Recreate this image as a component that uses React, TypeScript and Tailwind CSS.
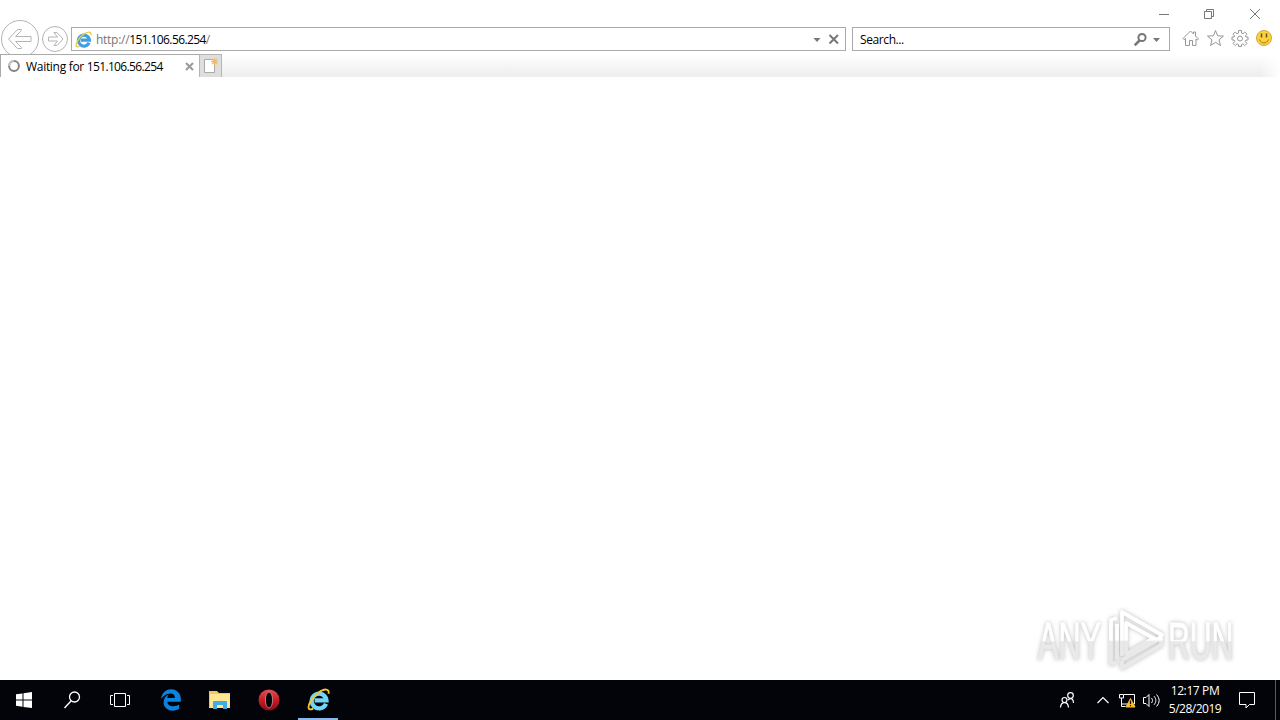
import { FaEdgeLegacy } from 'react-icons/fa6'

const IeLogo = ({ size, light = false }: { size: number; light?: boolean }) => (
  <svg width={size} height={size} viewBox="0 0 24 24" fill="none">
    <path
      d="M19.800 16.400A7.700 7.700 0 1 1 20.300 13H8"
      stroke={light ? '#72d5f6' : '#409fe0'}
      strokeWidth="4.500"
    />
    <path
      d="M6.500 21.500C1.500 24 0 20.500 3.500 14.300 7.500 7.200 15.500 1.200 20 1.600c2.400.3 3 2 2.400 4.400"
      stroke={light ? '#f9c52c' : '#e5cb42'}
      strokeWidth="1.900"
    />
  </svg>
)

const WindowButtons = () => (
  <div className="flex h-[27px] justify-end pr-[18px] text-[#777]">
    <svg width="104" height="27" viewBox="1158 0 104 27" fill="none" stroke="currentColor">
      <path d="M1159 14.5h10M1204.500 11.500h7v7h-7zM1206.500 11v-1.500h7v7h-2M1250 9l10 10M1260 9l-10 10" />
    </svg>
  </div>
)

const NavButtons = () => (
  <svg width="71" height="38" viewBox="0 19 71 38" fill="none" stroke="#b4b4b4" className="-mt-2 shrink-0">
    <circle cx="20" cy="39" r="18.500" fill="#fff" />
    <circle cx="55" cy="39" r="12.500" fill="#fff" />
    <path d="M8.500 39l9-9.500h4v1l-6 6h15.500v5H15.500l6 6v1h-4z" />
    <path d="M63 39l-6-6.500h-3l3.500 4.500h-9v4h9l-3.500 4.500h3z" />
  </svg>
)

const AddressBar = () => (
  <div className="flex h-6 w-[775px] items-center border border-[#aaa] bg-white pl-[3px]">
    <IeLogo size={17} />
    <p className="ml-1 whitespace-nowrap pt-0.5 text-[12px] leading-[22px] tracking-[-0.28px] text-[#777]">
      http://
      <span className="tracking-[-0.6px] text-black">151.106.56.254</span>/
    </p>
    <svg width="28" height="22" viewBox="812 28 28 22" className="ml-auto mr-[5px]">
      <path d="M813.500 38h7l-3.500 4z" fill="#777" />
      <path d="M829.500 35l8.500 8.500M838 35l-8.500 8.500" stroke="#777" strokeWidth="2" />
    </svg>
  </div>
)

const SearchBox = () => (
  <div className="ml-1.5 flex h-6 w-[318px] items-center justify-between border border-[#aaa] bg-white px-[7px]">
    <span className="pt-0.5 text-[12px] leading-[22px] tracking-[-0.4px] text-black">Search...</span>
    <svg width="28" height="22" viewBox="1134 28 28 22" fill="none">
      <circle cx="1142" cy="37.500" r="3.600" stroke="#777" strokeWidth="2" />
      <path d="M1139.500 40.500l-4.800 4.800" stroke="#777" strokeWidth="2.600" />
      <path d="M1153 38h7l-3.500 4z" fill="#777" />
    </svg>
  </div>
)

const BrowserTools = () => (
  <svg width="94" height="24" viewBox="1181 27 94 24" fill="none" stroke="#969696" className="ml-[11px] shrink-0">
    <path d="M1183 38.500l7.500-7.500 3 3v-2h2v4l3 3-1 1-1.500-1v6.500h-3.500v-5h-3v5h-4V38.500l-1.500 1.200z" />
    <path d="M1215.500 30.500l2.100 5.300 5.900.3-4.500 3.700 1.500 5.700-5-3.200-5 3.200 1.500-5.700-4.500-3.700 5.900-.3z" />
    <path d="M1238.500 30.500h3v2.500l1.500.7 1.800-1.700 2.200 2.200-1.700 1.800.7 1h2v3h-2l-.7 1.500 1.700 1.800-2.200 2.200-1.800-1.700-1.500.7v2h-3v-2l-1.500-.7-1.800 1.700-2.200-2.200 1.700-1.800-.7-1.500h-2v-3h2l.7-1-1.700-1.800 2.200-2.200 1.800 1.700 1.500-.7z" />
    <circle cx="1240" cy="38.500" r="2.500" />
    <circle cx="1264" cy="38" r="7.500" fill="#fbd33c" stroke="#d5a43a" />
    <path d="M1261.500 33.500v4M1266.500 33.500v4" stroke="#71551a" strokeWidth="1.600" />
    <path d="M1259.500 39.500c1.500 4.500 7.500 4.500 9 0" stroke="#a37718" />
  </svg>
)

const TabStrip = () => (
  <div className="relative flex h-[23px] bg-linear-to-b from-white to-[#ededed]">
    <div className="flex w-[199px] items-center border-l border-t border-[#aaa] bg-white pl-[6px]">
      <svg width="14" height="14" viewBox="0 0 14 14" fill="none" strokeWidth="2">
        <circle cx="7" cy="7" r="4.900" stroke="#858585" />
        <path d="M2.100 7A4.900 4.900 0 0 1 7 2.100" stroke="#c5c5c5" />
      </svg>
      <p className="ml-[5px] whitespace-nowrap pt-0.5 text-[12px] leading-5 tracking-[-0.3px] text-black">
        Waiting for <span className="tracking-[-0.65px]">151.106.56.254</span>
      </p>
      <svg width="9" height="9" viewBox="0 0 9 9" stroke="#999" strokeWidth="2" className="ml-auto mr-[5px]">
        <path d="M1 1l7 7M8 1L1 8" />
      </svg>
    </div>
    <div className="w-[23px] border border-b-0 border-[#b5b5b5] bg-[#dedede]">
      <svg width="21" height="22" viewBox="0 0 21 22" fill="none">
        <path d="M4.500 4.500h8l2 3v10h-10z" fill="#fff" stroke="#aaa" />
        <path d="M14.500 3v7M11 6.500h7M12 4l5 5M17 4l-5 5" stroke="#f5b95c" strokeWidth="1.200" />
      </svg>
    </div>
    <div className="ml-auto w-5 bg-linear-to-r from-transparent to-white" />
  </div>
)

const Watermark = () => (
  <svg
    width="210"
    height="72"
    viewBox="1030 604 210 72"
    fill="none"
    className="absolute bottom-1 right-10 overflow-visible drop-shadow-[0_0_2px_#bbb]"
  >
    <defs>
      <linearGradient id="mark" x1="0" y1="611" x2="0" y2="670" gradientUnits="userSpaceOnUse">
        <stop offset="0.490" stopColor="#ffffff" />
        <stop offset="0.520" stopColor="#e9e9e9" />
      </linearGradient>
      <linearGradient id="letters" x1="0" y1="-36" x2="0" y2="0" gradientUnits="userSpaceOnUse">
        <stop offset="0.490" stopColor="#ffffff" />
        <stop offset="0.520" stopColor="#e9e9e9" />
      </linearGradient>
    </defs>
    <g fill="url(#letters)" stroke="url(#letters)" fontFamily="'Liberation Sans', sans-serif" fontSize="52">
      <text transform="translate(1038 659) scale(.590 1)">ANY</text>
      <text transform="translate(1168 659) scale(.580 1)">RUN</text>
    </g>
    <g stroke="url(#mark)" strokeWidth="3.800" strokeLinejoin="round">
      <path d="M1122 656v-44l40 23-5 5-31-17v31l28-16" />
      <path d="M1117 618l-6 2v44l6-2M1117 624v35M1122 661v7l39-23v-7l-39 22" />
    </g>
  </svg>
)

const Taskbar = () => (
  <div className="flex h-10 bg-[#02040a] text-white">
    <svg width="148" height="40" viewBox="0 680 148 40" fill="none" stroke="#fff">
      <path
        d="M16 694.300l6.500-.9v6.200H16zM23.500 693.200l8.500-1.200v7.600h-8.500zM16 700.600h6.500v6.100l-6.500-.9zM23.500 700.600h8.500v7.500l-8.500-1.200z"
        fill="#fff"
        stroke="none"
      />
      <circle cx="74.500" cy="697" r="5" strokeWidth="1.300" />
      <path d="M71 701l-6.500 7" strokeWidth="1.400" />
      <path d="M114.500 693.500h11v13h-11zM113 695.500h-2.500v9h2.500M127 695.500h2.500v9h-2.500" />
    </svg>
    <div className="flex w-[46px] items-center justify-center">
      <FaEdgeLegacy size={22} color="#0b82df" />
    </div>
    <div className="flex w-[52px] items-center justify-center">
      <svg width="22" height="20" viewBox="0 0 22 20">
        <path d="M0 1h8l2 2h11v15H0z" fill="#efc95c" />
        <path d="M1 4h20v14H1z" fill="#ffe594" />
        <path d="M4 19v-7q0-1 1-1h12q1 0 1 1v7h-4v-4H8v4z" fill="#3caee4" />
      </svg>
    </div>
    <div className="flex w-[46px] items-center justify-center">
      <svg width="22" height="22" viewBox="0 0 22 22">
        <defs>
          <linearGradient id="opera" x1="0" y1="0" x2="0" y2="1">
            <stop stopColor="#e64d50" />
            <stop offset="0.500" stopColor="#c71d26" />
            <stop offset="1" stopColor="#8e0b14" />
          </linearGradient>
        </defs>
        <circle cx="11" cy="11" r="10.500" fill="url(#opera)" />
        <ellipse cx="11" cy="11" rx="3.600" ry="8" fill="#050308" stroke="#e9a5a5" strokeWidth=".7" />
      </svg>
    </div>
    <div className="ml-1.5 flex w-10 items-center justify-center border-b-2 border-[#84b9e9]">
      <IeLogo size={23} light />
    </div>
    <svg
      width="106"
      height="40"
      viewBox="1058 680 106 40"
      fill="none"
      stroke="#fff"
      strokeWidth="1.200"
      className="ml-auto"
    >
      <circle cx="1070.500" cy="695.500" r="2.800" />
      <circle cx="1064.500" cy="700" r="2.500" />
      <path d="M1060.500 707.500c.5-6.500 7.500-6.500 8 0M1068 700c3-3 5.500-1 5.500 3" />
      <path d="M1097.500 703l5.500-5.500 5.500 5.500" />
      <path
        d="M1124 694.500h10.500v9.500H1122M1119.500 694.500h4v3.500h-4zM1121.500 698v8.500h4"
        strokeWidth="1"
      />
      <path d="M1130.500 698.500l4.500 8.500h-9z" fill="#f7bd2d" stroke="#f7bd2d" strokeWidth="1" />
      <path d="M1130.500 700.500v3.500M1130.500 705v1.200" stroke="#111" />
      <path
        d="M1143.500 697.500h2.500l3-3v12l-3-3h-2.500zM1151.500 698c1.300 1.500 1.300 3.500 0 5M1154 696.200c2.400 2.600 2.400 6 0 8.600M1156.500 694.500c3.500 4 3.500 8 0 12"
        strokeWidth="1"
      />
    </svg>
    <div className="flex w-[62px] flex-col items-center justify-center whitespace-nowrap text-[12px] leading-[18px]">
      <span className="tracking-[-0.38px]">12:17 PM</span>
      <span className="tracking-[-0.5px]">5/28/2019</span>
    </div>
    <svg width="54" height="40" viewBox="1226 680 54 40" fill="none" stroke="#fff">
      <path d="M1239.500 692.500h15v12h-5l-3.500 3.500v-3.500h-6.500z" />
      <path d="M1275.500 680v40" stroke="#555960" />
    </svg>
  </div>
)

const App = () => (
  <div className="flex h-screen w-full flex-col overflow-hidden bg-white font-['Open_Sans','Noto_Sans',sans-serif]">
    <WindowButtons />
    <div className="flex h-[27px] items-start">
      <NavButtons />
      <AddressBar />
      <SearchBox />
      <BrowserTools />
    </div>
    <TabStrip />
    <main className="relative flex-1 bg-white">
      <Watermark />
    </main>
    <Taskbar />
  </div>
)

export default App
